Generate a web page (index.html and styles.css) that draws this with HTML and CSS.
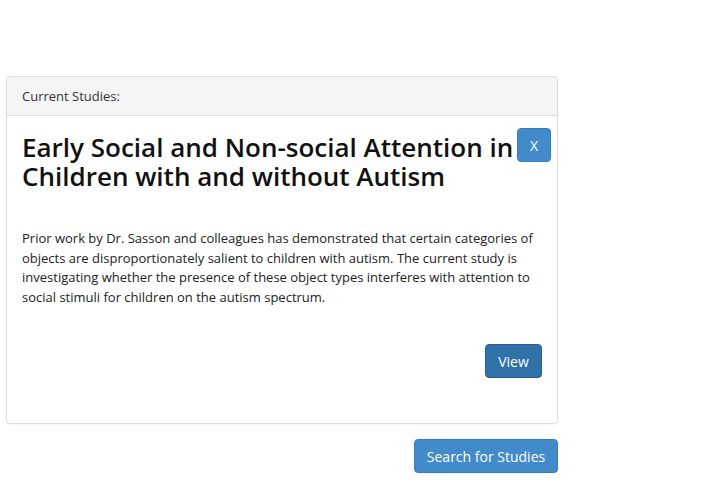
FILE: index.html
```html
<!DOCTYPE html>
<html>
<head>
<meta charset="utf-8">
<link rel="stylesheet" href="styles.css">
</head>
<body>
<div class="page">
  <div class="panel">
    <div class="panel-heading">Current Studies:</div>
    <div class="panel-body">
      <div class="title-row">
        <h1 class="title">Early Social and Non-social Attention in Children with and without Autism</h1>
        <button class="btn btn-close">X</button>
      </div>
      <p class="desc">Prior work by Dr. Sasson and colleagues has demonstrated that certain categories of objects are disproportionately salient to children with autism. The current study is investigating whether the presence of these object types interferes with attention to social stimuli for children on the autism spectrum.</p>
      <div class="actions">
        <button class="btn btn-view">View</button>
      </div>
    </div>
  </div>
  <div class="footer">
    <button class="btn btn-search">Search for Studies</button>
  </div>
</div>
</body>
</html>
```
FILE: styles.css
```css
* { box-sizing: border-box; }
html, body { margin: 0; padding: 0; background: #fff; }
body {
  font-family: "Open Sans", "Liberation Sans", sans-serif;
  font-size: 13px;
  color: #222;
}
.page {
  width: 552px;
  margin-left: 6px;
  padding-top: 76px;
}
.panel {
  border: 1px solid #ddd;
  border-radius: 4px;
  background: #fff;
  box-shadow: 0 1px 1px rgba(0,0,0,0.05);
}
.panel-heading {
  background: #f5f5f5;
  border-bottom: 1px solid #ddd;
  border-radius: 3px 3px 0 0;
  padding: 0 15px;
  height: 39px;
  line-height: 39px;
  font-size: 13px;
  color: #333;
}
.panel-body {
  padding: 11px 6px 0 15px;
  height: 307px;
}
.title-row {
  display: flex;
  align-items: flex-start;
  justify-content: space-between;
}
.title {
  margin: 6px 0 0 0;
  font-size: 26px;
  line-height: 29px;
  font-weight: 600;
  color: #111;
  width: 494px;
}
.btn {
  font-family: "Open Sans", "Liberation Sans", sans-serif;
  font-size: 14px;
  color: #fff;
  border-radius: 4px;
  border: 1px solid #357ebd;
  background: #428bca;
  height: 34px;
  padding: 0 12px;
  white-space: nowrap;
  cursor: pointer;
}
.btn-close {
  width: 34px;
  padding: 0;
  margin-top: 1px;
  font-size: 14px;
}
.desc {
  margin: 38px 10px 0 0;
  line-height: 19.5px;
  font-size: 13px;
  color: #222;
}
.actions {
  display: flex;
  justify-content: flex-end;
  margin-top: 37px;
  padding-right: 9px;
}
.btn-view {
  background: #3071a9;
  border-color: #285e8e;
  width: 57px;
}
.footer {
  display: flex;
  justify-content: flex-end;
  margin-top: 15px;
}
.btn-search {
  width: 144px;
  padding: 0;
}
```
